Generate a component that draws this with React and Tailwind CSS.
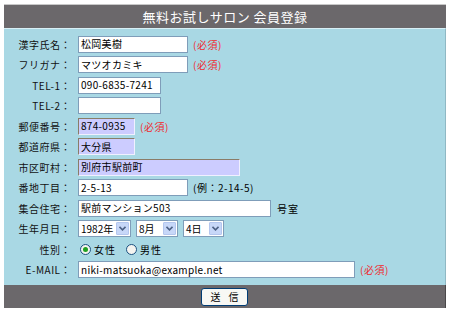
const FONT = { fontFamily: '"MS Gothic", "Noto Sans CJK JP", "DejaVu Sans", sans-serif' };

function Label({ children }) {
  return <div className="w-[67px] shrink-0 text-right text-[10px] text-[#111] tracking-[0.5px]">{children}</div>;
}

function Text({ value, w, lav }) {
  return (
    <div
      className={
        "h-[17px] px-[2px] flex items-center text-[10px] text-black leading-none tracking-[0.3px] " +
        (lav
          ? "bg-[#ccccff] border border-t-[#8a7c68] border-l-[#8a7c68] border-r-[#f0f0ff] border-b-[#f0f0ff]"
          : "bg-white border border-[#7f9db9]")
      }
      style={{ width: w }}
    >
      {value}
    </div>
  );
}

function Select({ value, w }) {
  return (
    <div className="h-[17px] bg-white border border-[#7f9db9] flex items-center justify-between pl-[2px] pr-[1px]" style={{ width: w }}>
      <span className="text-[10px] leading-none text-black">{value}</span>
      <span className="w-[13px] h-[13px] bg-[#c7d7f8] border border-[#b4c6ee] rounded-[1px] flex items-center justify-center">
        <svg width="7" height="5" viewBox="0 0 7 5"><path d="M0.5 0.8 L3.5 3.8 L6.5 0.8" stroke="#4d6185" strokeWidth="1.6" fill="none" /></svg>
      </span>
    </div>
  );
}

function Radio({ on }) {
  return (
    <span className="w-[11px] h-[11px] rounded-full border border-[#1c5180] bg-[#f4f4f0] flex items-center justify-center">
      {on && <span className="w-[5px] h-[5px] rounded-full bg-[#21a121]" />}
    </span>
  );
}

const Req = () => <span className="text-[10px] text-[#f0282c] ml-[5px] tracking-[0.5px]">(必須)</span>;

function Row({ label, children }) {
  return (
    <div className="h-[20.5px] flex items-center">
      <Label>{label}</Label>
      <div className="ml-[7px] flex items-center">{children}</div>
    </div>
  );
}

export default function App() {
  return (
    <div className="w-[450px] h-[315px] bg-white pt-[4px] pl-[4px]" style={FONT}>
      <div className="w-[442px]">
        <div className="h-[24px] bg-[#6b686b] border-t border-[#c8c8c8] flex items-center justify-center text-white text-[13px] tracking-[0.5px]">
          無料お試しサロン 会員登録
        </div>
        <div className="bg-[#a9d8e4] border-t border-[#d8f0f6] border-r border-r-[#8fb8c4] pt-[5px] pb-[5px]">
          <Row label="漢字氏名："><Text value="松岡美樹" w={110} /><Req /></Row>
          <Row label="フリガナ："><Text value="マツオカミキ" w={110} /><Req /></Row>
          <Row label="TEL-1："><Text value="090-6835-7241" w={83} /></Row>
          <Row label="TEL-2："><Text value="" w={83} /></Row>
          <Row label="郵便番号："><Text value="874-0935" w={57} lav /><Req /></Row>
          <Row label="都道府県："><Text value="大分県" w={57} lav /></Row>
          <Row label="市区町村："><Text value="別府市駅前町" w={162} lav /></Row>
          <Row label="番地丁目：">
            <Text value="2-5-13" w={110} />
            <span className="ml-[5px] text-[10px] text-black tracking-[0.5px]">(例：2-14-5)</span>
          </Row>
          <Row label="集合住宅：">
            <Text value="駅前マンション503" w={193} />
            <span className="ml-[6px] text-[10px] text-black tracking-[1px]">号室</span>
          </Row>
          <Row label="生年月日：">
            <div className="flex gap-[5px]">
              <Select value="1982年" w={53} />
              <Select value="8月" w={42} />
              <Select value="4日" w={41} />
            </div>
          </Row>
          <Row label="性別：">
            <div className="flex items-center text-[10px] text-black tracking-[1px]">
              <span className="ml-[2px]"><Radio on /></span>
              <span className="ml-[3px]">女性</span>
              <span className="ml-[10px]"><Radio /></span>
              <span className="ml-[3px]">男性</span>
            </div>
          </Row>
          <Row label="E-MAIL："><Text value="niki-matsuoka@example.net" w={277} /><Req /></Row>
        </div>
        <div className="h-[23px] bg-[#6b686b] border-r border-[#4a484a] flex items-center justify-center">
          <button className="w-[47px] h-[18px] bg-[#f8f8f4] border border-[#003c74] rounded-[3px] text-[10px] text-black tracking-[8px] pl-[8px] leading-none">
            送信
          </button>
        </div>
      </div>
    </div>
  );
}
